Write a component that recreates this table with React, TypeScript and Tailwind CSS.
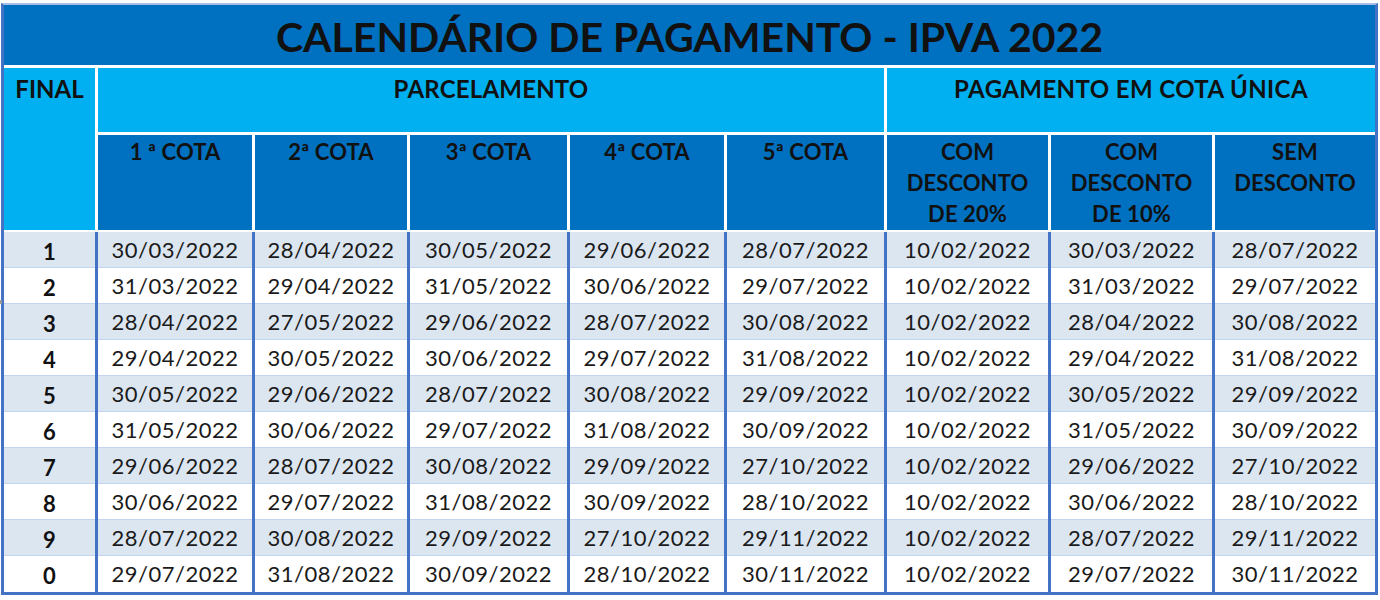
import React from "react";

const rows: string[][] = [
  ["1", "30/03/2022", "28/04/2022", "30/05/2022", "29/06/2022", "28/07/2022", "10/02/2022", "30/03/2022", "28/07/2022"],
  ["2", "31/03/2022", "29/04/2022", "31/05/2022", "30/06/2022", "29/07/2022", "10/02/2022", "31/03/2022", "29/07/2022"],
  ["3", "28/04/2022", "27/05/2022", "29/06/2022", "28/07/2022", "30/08/2022", "10/02/2022", "28/04/2022", "30/08/2022"],
  ["4", "29/04/2022", "30/05/2022", "30/06/2022", "29/07/2022", "31/08/2022", "10/02/2022", "29/04/2022", "31/08/2022"],
  ["5", "30/05/2022", "29/06/2022", "28/07/2022", "30/08/2022", "29/09/2022", "10/02/2022", "30/05/2022", "29/09/2022"],
  ["6", "31/05/2022", "30/06/2022", "29/07/2022", "31/08/2022", "30/09/2022", "10/02/2022", "31/05/2022", "30/09/2022"],
  ["7", "29/06/2022", "28/07/2022", "30/08/2022", "29/09/2022", "27/10/2022", "10/02/2022", "29/06/2022", "27/10/2022"],
  ["8", "30/06/2022", "29/07/2022", "31/08/2022", "30/09/2022", "28/10/2022", "10/02/2022", "30/06/2022", "28/10/2022"],
  ["9", "28/07/2022", "30/08/2022", "29/09/2022", "27/10/2022", "29/11/2022", "10/02/2022", "28/07/2022", "29/11/2022"],
  ["0", "29/07/2022", "31/08/2022", "30/09/2022", "28/10/2022", "30/11/2022", "10/02/2022", "29/07/2022", "30/11/2022"],
];

const subHeaders: string[][] = [
  ["1 ª COTA"],
  ["2ª COTA"],
  ["3ª COTA"],
  ["4ª COTA"],
  ["5ª COTA"],
  ["COM", "DESCONTO", "DE 20%"],
  ["COM", "DESCONTO", "DE 10%"],
  ["SEM", "DESCONTO"],
];

const cols = "grid grid-cols-[91px_154px_152px_157px_154px_157px_161px_161px_160px] gap-x-[3px]";

export default function App() {
  return (
    <div className="relative w-[1380px] h-[600px] bg-white font-['Lato','Liberation_Sans',sans-serif] text-[#111]">
      <div className="absolute left-0 top-[297px] w-[2px] h-[4px] bg-[#9a9a9a]" />
      <div className="ml-[1px] mt-[3px] w-[1377px] border-[3px] border-[#4472c4] border-t-[2px] border-t-[#a9bde6]">
        <div className={`${cols} gap-y-[3px] bg-white`}>
          <div className="col-span-9 h-[60px] bg-[#0070c0] flex items-center justify-center">
            <span className="text-[41px] font-bold leading-none pt-[3px]">
              CALENDÁRIO DE PAGAMENTO - IPVA 2022
            </span>
          </div>
          <div className="row-span-2 bg-[#00b0f0] flex justify-center pt-[9px]">
            <span className="text-[24px] font-bold leading-[24px]">FINAL</span>
          </div>
          <div className="col-span-5 h-[64px] bg-[#00b0f0] flex justify-center pt-[9px]">
            <span className="text-[24px] font-bold leading-[24px] tracking-[0.2px]">PARCELAMENTO</span>
          </div>
          <div className="col-span-3 h-[64px] bg-[#00b0f0] flex justify-center pt-[9px]">
            <span className="text-[24px] font-bold leading-[24px] tracking-[0.4px]">PAGAMENTO EM COTA ÚNICA</span>
          </div>
          {subHeaders.map((lines, i) => (
            <div key={i} className="h-[95px] bg-[#0070c0] flex flex-col items-center pt-[1px]">
              {lines.map((l, j) => (
                <span key={j} className="text-[22px] font-bold leading-[31px] tracking-[0.1px]">
                  {l}
                </span>
              ))}
            </div>
          ))}
        </div>
        <div className="h-[2px] bg-white" />
        <div className="flex flex-col">
          {rows.map((r, i) => (
            <div key={i} className={`${cols} bg-[#4472c4]`}>
              {r.map((c, j) => (
                <div
                  key={j}
                  className={`h-[36px] flex items-center justify-center ${
                    i % 2 === 0 ? "bg-[#dce6f1]" : "bg-white"
                  } ${i < rows.length - 1 ? "border-b border-[#c3d5ec]" : ""}`}
                >
                  {j === 0 ? (
                    <span className="text-[22px] font-bold leading-none pt-[4px]">{c}</span>
                  ) : (
                    <span className="text-[22px] leading-none tracking-[0.5px] text-[#1a1a1a]">{c}</span>
                  )}
                </div>
              ))}
            </div>
          ))}
        </div>
      </div>
    </div>
  );
}
